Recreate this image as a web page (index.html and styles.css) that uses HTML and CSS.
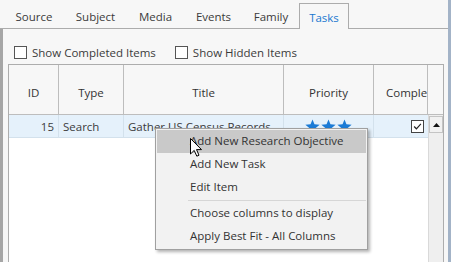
FILE: index.html
```html
<!DOCTYPE html>
<html>
<head>
<meta charset="utf-8">
<title>Tasks</title>
<link rel="stylesheet" href="styles.css">
</head>
<body>
<div class="window">
  <div class="tabs">
    <span class="tab w-source">Source</span>
    <span class="tab w-subject">Subject</span>
    <span class="tab w-media">Media</span>
    <span class="tab w-events">Events</span>
    <span class="tab w-family">Family</span>
    <span class="tab on w-tasks">Tasks</span>
  </div>
  <div class="panel">
    <div class="filters">
      <label class="check"><span class="box"></span>Show Completed Items</label>
      <label class="check"><span class="box"></span>Show Hidden Items</label>
    </div>
    <div class="grid">
      <div class="hd">ID</div>
      <div class="hd">Type</div>
      <div class="hd">Title</div>
      <div class="hd">Priority</div>
      <div class="hd clip">Complete</div>
      <div class="hd corner"></div>

      <div class="cell num">15</div>
      <div class="cell">Search</div>
      <div class="cell">Gather US Census Records</div>
      <div class="cell stars">
        <svg viewBox="0 0 16 16" width="15" height="15"><polygon points="8,0.5 10.1,5.6 15.6,6 11.4,9.6 12.7,15 8,12.1 3.3,15 4.6,9.6 0.4,6 5.9,5.6"/></svg>
        <svg viewBox="0 0 16 16" width="15" height="15"><polygon points="8,0.5 10.1,5.6 15.6,6 11.4,9.6 12.7,15 8,12.1 3.3,15 4.6,9.6 0.4,6 5.9,5.6"/></svg>
        <svg viewBox="0 0 16 16" width="15" height="15"><polygon points="8,0.5 10.1,5.6 15.6,6 11.4,9.6 12.7,15 8,12.1 3.3,15 4.6,9.6 0.4,6 5.9,5.6"/></svg>
      </div>
      <div class="cell done">
        <span class="box checked"><svg viewBox="0 0 13 13" width="11" height="11"><polyline points="2.5,6.5 5.2,9.2 10.5,3.5" fill="none" stroke="#222" stroke-width="1.4"/></svg></span>
      </div>

      <div class="scroll">
        <div class="up"><svg viewBox="0 0 7 4" width="7" height="4"><polygon points="3.5,0 7,4 0,4" fill="#111"/></svg></div>
      </div>
      <div class="empty"></div>
    </div>
  </div>
</div>

<div class="menu">
  <div class="item hot">Add New Research Objective</div>
  <div class="item">Add New Task</div>
  <div class="item">Edit Item</div>
  <div class="sep"></div>
  <div class="item">Choose columns to display</div>
  <div class="item">Apply Best Fit - All Columns</div>
</div>

<svg class="cursor" viewBox="0 0 12 19" width="12" height="19"><path d="M0.5,0.5 L0.5,16 L4.2,12.4 L6.8,18.2 L9,17.2 L6.5,11.6 L11.5,11.6 Z" fill="#fff" stroke="#000" stroke-width="1"/></svg>
</body>
</html>
```

FILE: styles.css
```css
* { margin: 0; padding: 0; box-sizing: border-box; }
body { width: 451px; height: 262px; overflow: hidden; background: #f7f7f7; font-family: "Open Sans", "Noto Sans", sans-serif; font-size: 11.5px; color: #3b3b3b; position: relative; }

.window { height: 262px; display: flex; flex-direction: column; border-right: 3px solid #a3b3c7; }

.tabs { height: 29px; padding-left: 4px; display: flex; align-items: flex-end; border-bottom: 1px solid #acacac; }
.tab { height: 28px; line-height: 33px; text-align: center; }
.tab.on { border: 1px solid #acacac; border-bottom: none; background: #f7f7f7; color: #1a78d0; margin-bottom: -1px; height: 26px; line-height: 27px; }
.w-source { width: 60px; }
.w-subject { width: 63px; }
.w-media { width: 57px; }
.w-events { width: 59px; }
.w-family { width: 56px; }
.w-tasks { width: 50px; }

.panel { flex: 1; display: flex; flex-direction: column; border-left: 3px solid #a6a6a6; padding: 0 4px 0 5px; }

.filters { display: flex; height: 20px; margin-top: 13px; align-items: center; padding-left: 6px; }
.check { display: flex; align-items: center; margin-right: 19px; }
.box { display: inline-block; width: 13px; height: 13px; border: 1px solid #555; background: #fff; margin-right: 5px; }

.grid { margin-top: 2px; flex: 1; border: 1px solid #adadad; border-bottom: none; background: #fff; display: grid; grid-template-columns: 50px 65px 160px 90px 54px 15px; grid-template-rows: 50px 23px 1fr; }

.hd { background: #f7f7f7; border-right: 1px solid #bdbdbd; border-bottom: 1px solid #bdbdbd; display: flex; align-items: center; justify-content: center; padding-top: 5px; color: #333; }
.hd.clip { justify-content: flex-start; padding-left: 12px; overflow: hidden; white-space: nowrap; }
.hd.corner { border-right: none; }

.cell { background: #e5f1fb; border-right: 1px solid #d3e1ec; border-bottom: 1px solid #d3e1ec; display: flex; align-items: center; padding: 0 4px; white-space: nowrap; overflow: hidden; }
.cell.num { justify-content: flex-end; }
.stars { justify-content: center; gap: 1px; }
.stars svg { fill: #1b7bd6; }
.done { justify-content: flex-end; padding-right: 4px; border-right: none; }
.box.checked { margin: 0; display: flex; align-items: center; justify-content: center; border-color: #444; }

.scroll { grid-row: 2 / 4; grid-column: 6; background: #efefef; border-left: 1px solid #d9d9d9; }
.up { height: 17px; margin: 1px 0 0; border: 1px solid #c4c4c4; background: #f1f1f1; display: flex; align-items: center; justify-content: center; }
.empty { grid-row: 3; grid-column: 1 / 6; }

.menu { position: absolute; left: 155px; top: 128px; width: 213px; padding: 1px; background: #f2f2f2; border: 1px solid #a0a0a0; box-shadow: 2px 2px 3px rgba(0,0,0,.3); color: #333; }
.item { height: 23px; line-height: 22px; padding-left: 33px; white-space: nowrap; }
.item.hot { background: #c9c9c9; }
.sep { margin-left: 31px; border-top: 1px solid #d6d6d6; margin-top: 1px; height: 2px; }

.cursor { position: absolute; left: 190px; top: 138px; }
```
